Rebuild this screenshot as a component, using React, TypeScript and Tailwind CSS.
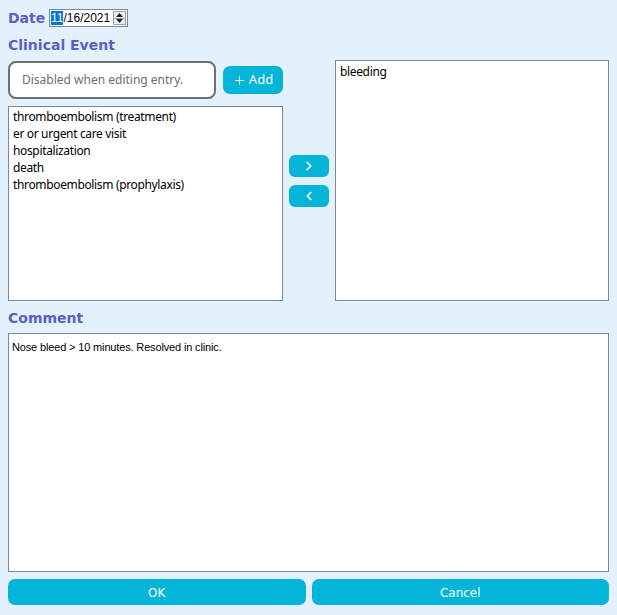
import { ChevronLeft, ChevronRight, Plus } from "lucide-react";

const heading = "font-['DejaVu_Sans',sans-serif] font-bold text-[14px] text-[#5b5fc7]";
const listFont = "font-['Noto_Sans',sans-serif] text-[12px] tracking-[-0.35px] text-black";

const leftItems = [
  "thromboembolism (treatment)",
  "er or urgent care visit",
  "hospitalization",
  "death",
  "thromboembolism (prophylaxis)",
];

export default function App() {
  return (
    <div className="w-[617px] h-[615px] bg-[#e3f1fd] px-[8px] pt-[9px] flex flex-col">
      {/* Date */}
      <div className="flex items-center h-[18px]">
        <span className={`${heading} w-[41px] pt-[1px]`}>Date</span>
        <div className="flex items-center h-[18px] w-[79px] bg-white border border-[#7a8a99] pl-[1px] font-['Liberation_Sans',sans-serif] text-[12px] text-black">
          <span className="bg-[#0078d7] text-white leading-[14px]">11</span>
          <span className="leading-[14px]">/16/2021</span>
          <div className="ml-auto mr-[1px] flex flex-col h-[14px] w-[13px] border border-[#9aa3ac] bg-[#eceff2]">
            <div className="flex-1 flex items-center justify-center border-b border-[#9aa3ac]">
              <svg width="7" height="4" viewBox="0 0 7 4"><path d="M3.5 0 L7 4 L0 4 Z" fill="#222" /></svg>
            </div>
            <div className="flex-1 flex items-center justify-center">
              <svg width="7" height="4" viewBox="0 0 7 4"><path d="M0 0 L7 0 L3.5 4 Z" fill="#222" /></svg>
            </div>
          </div>
        </div>
      </div>

      {/* Clinical Event */}
      <div className={`${heading} mt-[9px] leading-[18px]`}>Clinical Event</div>

      <div className="flex mt-[6px] h-[241px]">
        <div className="w-[275px] flex flex-col">
          <div className="flex items-center h-[38px] mt-[1px]">
            <div className="w-[208px] h-[38px] rounded-[8px] border-2 border-[#707070] bg-white flex items-center pl-[12px] font-['Noto_Sans',sans-serif] text-[12px] text-[#6d6d6d]">
              Disabled when editing entry.
            </div>
            <button className="ml-[7px] w-[60px] h-[28px] rounded-[7px] bg-[#04b4d9] text-white flex items-center justify-center gap-[3px] font-['Noto_Sans',sans-serif] text-[13px]">
              <Plus size={13} strokeWidth={2} />
              Add
            </button>
          </div>
          <div className={`${listFont} mt-[7px] flex-1 bg-white border border-[#7a8a99] px-[4px] pt-[1px] leading-[17px]`}>
            {leftItems.map((item) => (
              <div key={item}>{item}</div>
            ))}
          </div>
        </div>

        <div className="w-[52px] flex flex-col items-center pt-[95px] gap-[8px]">
          <button className="w-[40px] h-[22px] rounded-[6px] bg-[#04b4d9] text-white flex items-center justify-center">
            <ChevronRight size={14} strokeWidth={3} />
          </button>
          <button className="w-[40px] h-[22px] rounded-[6px] bg-[#04b4d9] text-white flex items-center justify-center">
            <ChevronLeft size={14} strokeWidth={3} />
          </button>
        </div>

        <div className={`${listFont} w-[274px] bg-white border border-[#7a8a99] px-[4px] pt-[2px] leading-[17px]`}>
          <div>bleeding</div>
        </div>
      </div>

      {/* Comment */}
      <div className={`${heading} mt-[8px] leading-[18px]`}>Comment</div>
      <div className="mt-[6px] h-[239px] bg-white border border-[#7a8a99] px-[3px] pt-[5px] font-['Liberation_Sans',sans-serif] text-[11px] tracking-[-0.15px] text-black">
        Nose bleed &gt; 10 minutes. Resolved in clinic.
      </div>

      <div className="flex gap-[6px] mt-[7px]">
        <button className="flex-1 h-[26px] pt-[2px] rounded-[7px] bg-[#04b4d9] text-white font-['DejaVu_Sans',sans-serif] text-[12px]">OK</button>
        <button className="flex-1 h-[26px] pt-[2px] rounded-[7px] bg-[#04b4d9] text-white font-['DejaVu_Sans',sans-serif] text-[12px]">Cancel</button>
      </div>
    </div>
  );
}
